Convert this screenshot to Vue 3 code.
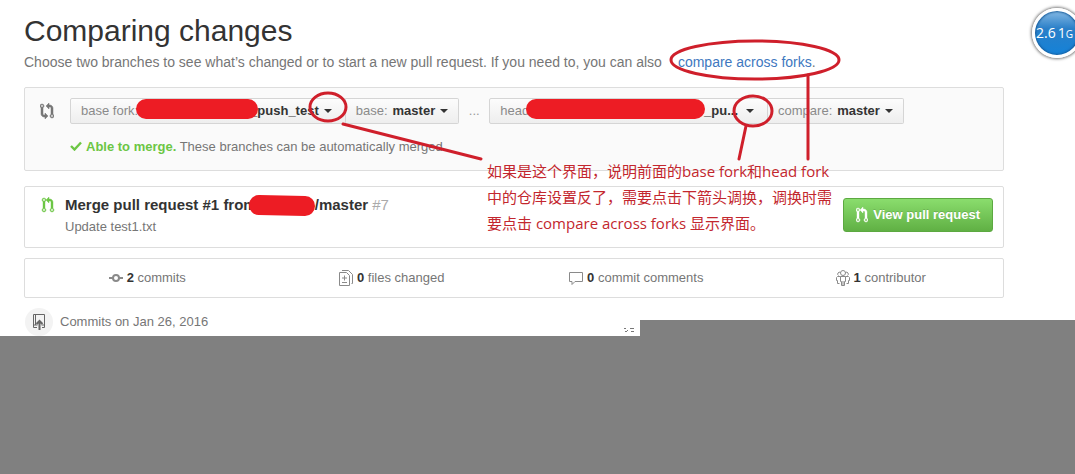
<script setup>
const stats = [
  { icon: 'commit', count: 2, label: 'commits' },
  { icon: 'diff', count: 0, label: 'files changed' },
  { icon: 'comment', count: 0, label: 'commit comments' },
  { icon: 'people', count: 1, label: 'contributor' }
]
const prPath = 'M11 11.28V5c-.03-.78-.34-1.47-.94-2.06C9.46 2.35 8.78 2.03 8 2H7V0L4 3l3 3V4h1c.27.02.48.11.69.31.21.2.3.42.31.69v6.28A1.993 1.993 0 0 0 10 15a1.993 1.993 0 0 0 1-3.72zm-1 2.92c-.66 0-1.2-.55-1.2-1.2 0-.65.55-1.2 1.2-1.2.65 0 1.2.55 1.2 1.2 0 .65-.55 1.2-1.2 1.2zM4 3c0-1.11-.89-2-2-2a1.993 1.993 0 0 0-1 3.72v6.56A1.993 1.993 0 0 0 2 15a1.993 1.993 0 0 0 1-3.72V4.72c.59-.34 1-.98 1-1.72zm-.8 10c0 .66-.55 1.2-1.2 1.2-.65 0-1.2-.55-1.2-1.2 0-.65.55-1.2 1.2-1.2.65 0 1.2.55 1.2 1.2zM2 4.2C1.34 4.2.8 3.65.8 3c0-.65.55-1.2 1.2-1.2.65 0 1.2.55 1.2 1.2 0 .65-.55 1.2-1.2 1.2z'
</script>

<template>
  <div class="page">
    <main class="content">
      <h1>Comparing changes</h1>
      <p class="lead">
        <span>Choose two branches to see what’s changed or to start a new pull request. If you need to, you can also</span>
        <span><a href="#forks">compare across forks</a>.</span>
      </p>

      <section class="range">
        <svg class="range-icon" width="14" height="16" viewBox="0 0 14 16" fill="#767676" stroke="#767676" stroke-width=".5">
          <path d="M5 12H4c-.27-.02-.48-.11-.69-.31-.21-.2-.3-.42-.31-.69V4.72A1.993 1.993 0 0 0 2 1a1.993 1.993 0 0 0-1 3.72V11c.03.78.34 1.47.94 2.06.6.59 1.28.91 2.06.94h1v2l3-3-3-3v2zM2 1.8c.66 0 1.2.55 1.2 1.2 0 .65-.55 1.2-1.2 1.2C1.35 4.2.8 3.65.8 3c0-.65.55-1.2 1.2-1.2zm11 9.48V5c-.03-.78-.34-1.47-.94-2.06-.6-.59-1.28-.91-2.06-.94H9V0L6 3l3 3V4h1c.27.02.48.11.69.31.21.2.3.42.31.69v6.28A1.993 1.993 0 0 0 12 15a1.993 1.993 0 0 0 1-3.72zm-1 2.92c-.66 0-1.2-.55-1.2-1.2 0-.65.55-1.2 1.2-1.2.65 0 1.2.55 1.2 1.2 0 .65-.55 1.2-1.2 1.2z" />
        </svg>
        <div>
          <div class="pickers">
            <div class="group">
              <button type="button"><span>base fork:</span><i class="gap-base"></i><b>_push_test</b><i class="caret"></i></button>
              <button type="button"><span>base:</span><b class="name">master</b><i class="caret"></i></button>
            </div>
            <span class="dots">...</span>
            <div class="group">
              <button type="button"><span>head</span><i class="gap-head"></i><b>_pu...</b><i class="caret wide"></i></button>
              <button type="button"><span>compare:</span><b class="name">master</b><i class="caret"></i></button>
            </div>
          </div>
          <p class="merge">
            <svg width="12" height="10" viewBox="0 0 12 10"><path d="M1 5l3.5 3.5L11 1.5" fill="none" stroke="#6cc644" stroke-width="2.4" /></svg>
            <strong>Able to merge.</strong> These branches can be automatically merged.
          </p>
        </div>
      </section>

      <section class="pull">
        <svg class="pull-icon" width="14" height="16" viewBox="-1 0 14 16" fill="#6cc644" stroke="#6cc644" stroke-width=".4"><path :d="prPath" /></svg>
        <div class="pull-text">
          <h2>Merge pull request #1 from<i class="gap-user"></i>/master <span>#7</span></h2>
          <p>Update test1.txt</p>
        </div>
        <button type="button" class="view">
          <svg width="12" height="16" viewBox="0 0 12 16" fill="#fff" stroke="#fff" stroke-width=".4"><path :d="prPath" /></svg>
          View pull request
        </button>
      </section>

      <ul class="stats">
        <li v-for="s in stats" :key="s.label">
          <svg v-if="s.icon === 'commit'" width="14" height="16" viewBox="0 0 14 16" fill="none" stroke="#8a8a8a" stroke-width="2">
            <circle cx="7" cy="8" r="3" /><path d="M0 8h4M10 8h4" />
          </svg>
          <svg v-else-if="s.icon === 'diff'" width="14" height="16" viewBox="0 0 14 16" fill="none" stroke="#8a8a8a">
            <path d="M.5 2.500h7l3 3v10H.5zM3 .5h6.500l4 4v9h-1M5.500 5.500v5M3 8h5M3 12.500h5" />
          </svg>
          <svg v-else-if="s.icon === 'comment'" width="14" height="16" viewBox="0 0 14 16" fill="none" stroke="#8a8a8a">
            <path d="M.5 2.500h13v9H6l-3 3v-3H.5z" />
          </svg>
          <svg v-else width="14" height="16" viewBox="0 0 14 16" fill="none" stroke="#8a8a8a">
            <circle cx="7" cy="3" r="2.500" />
            <path d="M4.500 2.500a1.500 1.500 0 1 0-2 3M9.500 2.500a1.500 1.500 0 1 1 2 3M4.500 6.500h5v5H8.500v4h-3v-4h-1zM7 11v4.500M4.500 6.500h-3l-1 1v3h1v3h2M9.500 6.500h3l1 1v3h-1v3h-2" />
          </svg>
          <b>{{ s.count }}</b>&nbsp;{{ s.label }}
        </li>
      </ul>

      <div class="day">
        <span class="badge">
          <svg width="14" height="16" viewBox="0 0 14 16" fill="none" stroke="#666">
            <path d="M5 13.500H1.500V.5h11v13H10M3.500 1v10M1.500 11h4M9.500 11h3" /><path d="M7.500 16V8M4.500 10l3-3 3 3" stroke-width="2" />
          </svg>
        </span>
        Commits on Jan 26, 2016
      </div>
    </main>

    <div class="blank"></div>

    <svg class="marks" width="860" height="340" viewBox="0 0 860 340" fill="none" stroke="#cf1f2b" stroke-width="3" stroke-linecap="round">
      <g stroke="#ed1c24" stroke-width="20">
        <path d="M146 109H248M536 109H695" />
        <path d="M259 205L305 206" />
      </g>
      <ellipse cx="328" cy="107" rx="18" ry="14" />
      <ellipse cx="753" cy="111" rx="19" ry="15" />
      <ellipse cx="755" cy="60" rx="84" ry="19" />
      <path d="M343 124L481 159M746 126L739 159M808 75V159" />
      <path d="M624 328.500h2M630 328.500h4M625 331.500h2M631 331.500h3M627 330.500h1" stroke="#777" stroke-width="1" stroke-linecap="butt" />
    </svg>
    <p class="note">如果是这个界面，说明前面的base fork和head fork<br />中的仓库设置反了，需要点击下箭头调换，调换时需<br />要点击 compare across forks 显示界面。</p>
    <div class="orb">2.6<span>1<small>G</small></span></div>
  </div>
</template>

<style>
body {
  margin: 0;
  background: #fff;
}
</style>

<style scoped>
.page {
  position: relative;
  display: flex;
  flex-direction: column;
  min-height: 100vh;
  overflow: hidden;
  font: 13px/20px "Liberation Sans", Arial, sans-serif;
  color: #767676;
}
.content {
  margin: 0 71px 0 24px;
}
h1, h2, p, ul {
  margin: 0;
  padding: 0;
  font-weight: normal;
}
h1 {
  padding-top: 10px;
  font-size: 30px;
  line-height: 42px;
  color: #333;
}
.lead {
  display: flex;
  gap: 16px;
  font-size: 14px;
  margin-bottom: 15px;
  white-space: nowrap;
}
a {
  color: #4078c0;
  text-decoration: none;
}
.range {
  display: flex;
  gap: 16px;
  padding: 10px 15px 13px;
  border: 1px solid #ddd;
  border-radius: 2px;
  background: #fafafa;
}
.range-icon {
  margin-top: 5px;
}
.pickers, .group {
  display: flex;
}
.dots {
  width: 30px;
  text-align: center;
  line-height: 26px;
  color: #999;
}
.group button {
  display: flex;
  align-items: center;
  height: 26px;
  padding: 0 10px;
  border: 1px solid #d5d5d5;
  background: linear-gradient(#fcfcfc, #eee);
  font: inherit;
  color: #333;
}
.group button + button {
  border-left-width: 0;
}
.group button:first-child {
  padding-right: 13px;
  border-radius: 2px 0 0 2px;
}
.group button:last-child {
  border-radius: 0 2px 2px 0;
}
.group button span {
  color: #8a8a8a;
}
.name {
  margin-left: 5px;
}
.caret {
  margin-left: 5px;
  border: 4px solid transparent;
  border-top-color: #333;
  border-bottom-width: 0;
}
.wide {
  margin-left: 8px;
}
.gap-base {
  width: 112px;
}
.gap-head {
  width: 175px;
}
.gap-user {
  display: inline-block;
  width: 58px;
}
.merge {
  margin-top: 13px;
}
.merge svg {
  margin-right: 4px;
}
.merge strong {
  color: #6cc644;
}
.pull {
  display: flex;
  margin-top: 15px;
  padding: 8px 10px 9px 16px;
  border: 1px solid #ddd;
  border-radius: 2px;
}
.pull-icon {
  margin-top: 2px;
}
.pull-text {
  flex: 1;
  margin-left: 10px;
}
h2 {
  font-size: 15px;
  line-height: 20px;
  font-weight: bold;
  color: #333;
}
h2 span {
  font-weight: normal;
  color: #aaa;
}
.pull-text p {
  line-height: 23px;
}
.view {
  display: flex;
  align-items: center;
  gap: 5px;
  height: 34px;
  margin-top: 3px;
  padding: 0 12px;
  border: 1px solid #5ca941;
  border-radius: 3px;
  background: linear-gradient(#8add6d, #60b044);
  color: #fff;
  font: bold 13px/20px "Liberation Sans", Arial, sans-serif;
  text-shadow: 0 -1px 0 rgba(0, 0, 0, 0.15);
}
.stats {
  display: grid;
  grid-template-columns: repeat(4, 1fr);
  margin-top: 10px;
  padding: 9px 0;
  border: 1px solid #ddd;
  border-radius: 2px;
  list-style: none;
}
.stats li {
  display: flex;
  justify-content: center;
  align-items: center;
}
.stats svg {
  margin-right: 4px;
}
.stats b {
  color: #333;
}
.day {
  display: flex;
  align-items: center;
  gap: 7px;
  height: 28px;
  margin-top: 10px;
}
.badge {
  display: grid;
  place-items: center;
  width: 28px;
  height: 28px;
  margin-left: 1px;
  border-radius: 50%;
  background: #f3f3f3;
}
.blank {
  position: relative;
  flex: 1;
  min-height: 138px;
  background: #808080;
}
.blank::before {
  content: "";
  position: absolute;
  left: 640px;
  right: 0;
  bottom: 100%;
  height: 16px;
  background: #808080;
}
.marks {
  position: absolute;
  top: 0;
  left: 0;
}
.note {
  position: absolute;
  top: 158px;
  left: 487px;
  font: 15px/26px "Open Sans", "Noto Sans CJK SC", sans-serif;
  color: #c3272e;
  white-space: nowrap;
}
.orb {
  position: absolute;
  top: 8px;
  left: 1032px;
  display: flex;
  align-items: center;
  gap: 2px;
  box-sizing: border-box;
  width: 50px;
  height: 50px;
  padding-left: 1px;
  border: 3px solid #fff;
  border-radius: 50%;
  background: linear-gradient(#85b9e4, #2a7fc8 40%, #1482d8);
  box-shadow: 0 0 3px 1px #777, inset 0 0 2px 1px #185b99;
  color: #fff;
  font: 14px/20px "Open Sans", sans-serif;
}
.orb small {
  font-size: 10px;
}
</style>
